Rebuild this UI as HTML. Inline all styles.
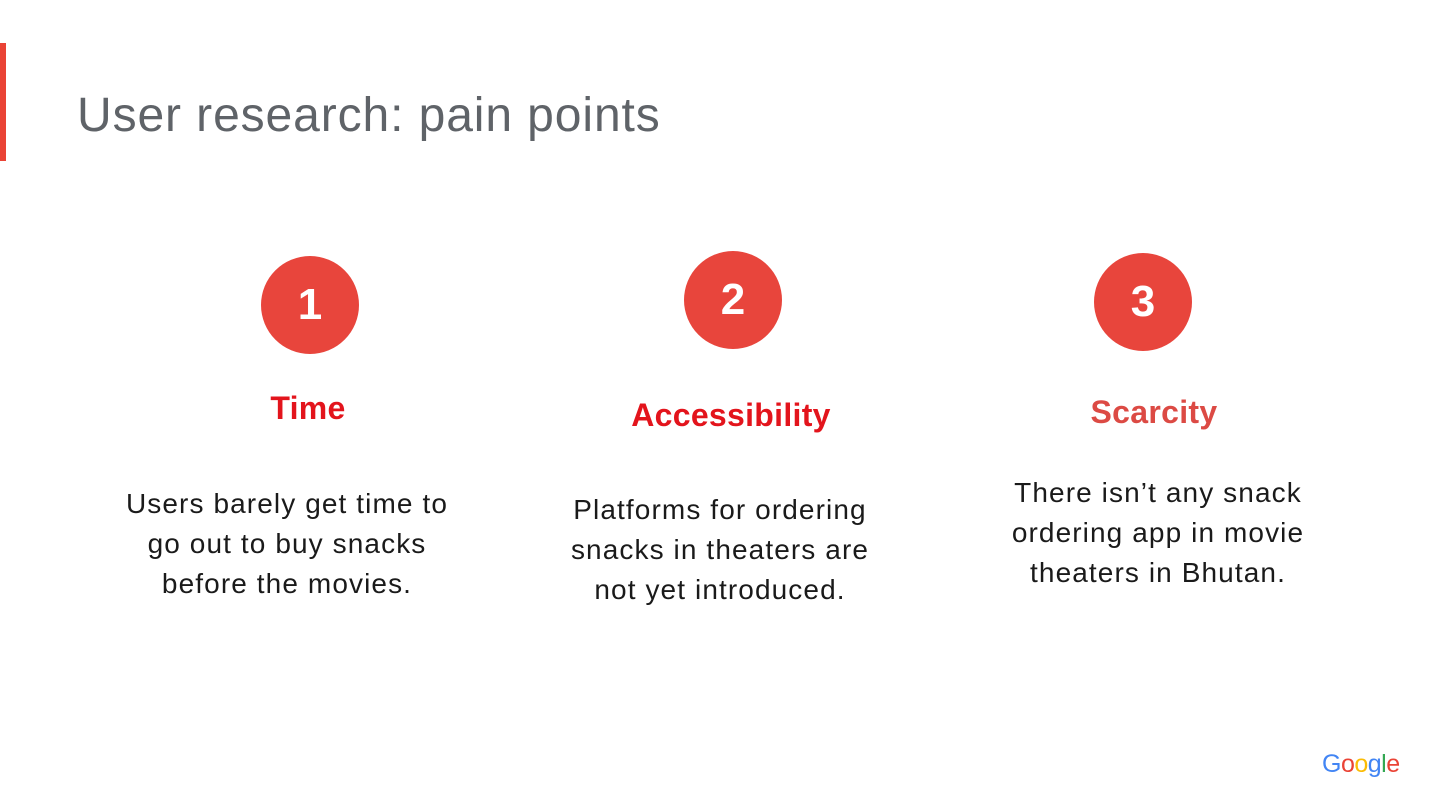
<!DOCTYPE html>
<html><head><style>
body{margin:0;width:1429px;height:790px;background:#fff;position:relative;overflow:hidden;font-family:"Liberation Sans",sans-serif}
.bar{position:absolute;left:0;top:43px;width:6px;height:118px;background:#ea4335}
h1{position:absolute;left:77px;top:84px;margin:0;font-weight:normal;font-size:48px;letter-spacing:0.9px;color:#5f6368;line-height:64px}
.c{position:absolute;width:98px;height:98px;border-radius:50%;background:#e8453c;color:#fff;font-size:44px;font-weight:bold;text-align:center;line-height:98px}
.h{position:absolute;width:400px;text-align:center;font-size:32px;font-weight:bold;line-height:40px;letter-spacing:0.3px}
.t{position:absolute;width:440px;text-align:center;font-size:28px;letter-spacing:1.1px;color:#1a1a1a;line-height:40px}
</style></head><body>
<div class="bar"></div>
<h1>User research: pain points</h1>
<div class="c" style="left:261px;top:256px">1</div>
<div class="c" style="left:684px;top:251px">2</div>
<div class="c" style="left:1094px;top:253px">3</div>
<div class="h" style="left:108px;top:388px;color:#e3141c">Time</div>
<div class="h" style="left:531px;top:395px;color:#e3141c">Accessibility</div>
<div class="h" style="left:954px;top:392px;color:#dc4a44">Scarcity</div>
<div class="t" style="left:67px;top:484px">Users barely get time to<br>go out to buy snacks<br>before the movies.</div>
<div class="t" style="left:500px;top:490px">Platforms for ordering<br>snacks in theaters are<br>not yet introduced.</div>
<div class="t" style="left:938px;top:473px">There isn’t any snack<br>ordering app in movie<br>theaters in Bhutan.</div>
<div style="position:absolute;left:1322px;top:749px;font-size:25px;letter-spacing:-0.5px;line-height:30px"><span style="color:#4285f4">G</span><span style="color:#ea4335">o</span><span style="color:#fbbc05">o</span><span style="color:#4285f4">g</span><span style="color:#34a853">l</span><span style="color:#ea4335">e</span></div>
</body></html>
